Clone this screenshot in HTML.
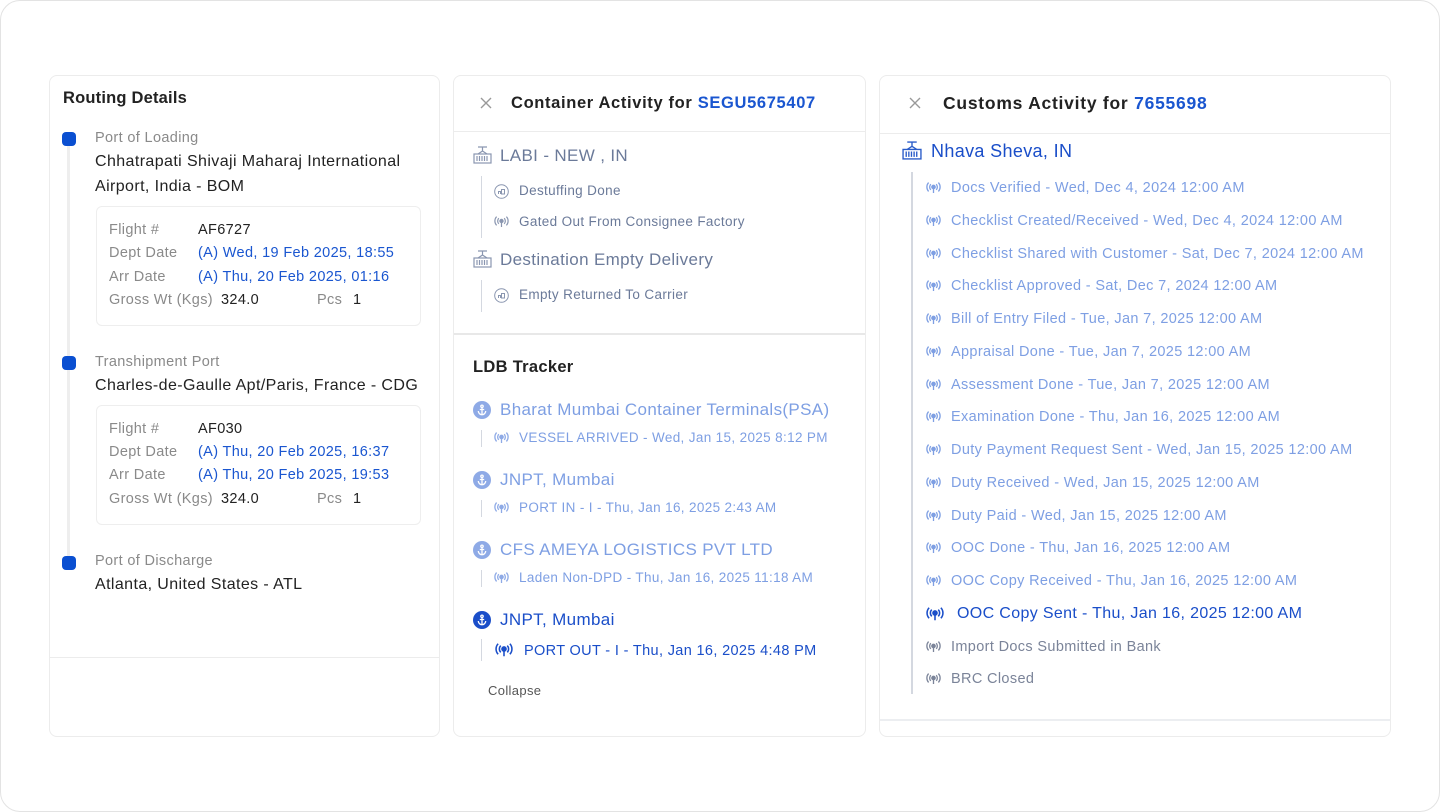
<!DOCTYPE html>
<html><head><meta charset="utf-8"><style>
*{margin:0;padding:0;box-sizing:border-box}
body{width:1440px;height:812px;background:#fff;font-family:"Liberation Sans",sans-serif;position:relative;overflow:hidden}
.outer{position:absolute;left:0;top:0;width:1440px;height:812px;border:1px solid #e3e3e3;border-radius:20px}
.p{position:absolute;border:1px solid #ececec;border-radius:8px;background:#fff}
.t{position:absolute;white-space:nowrap;line-height:20px;letter-spacing:0.35px}
.hr{position:absolute;height:1px;background:#ececec}
.vl{position:absolute;width:2px;background:#d4d8e0}
.box{position:absolute;border:1px solid #eee;border-radius:6px}
.lb{color:#8a8a8a;font-size:14.5px}
.v{color:#222;font-size:14.5px}
.bl{color:#1a56d0;font-size:14.5px}
.sq{position:absolute;width:14px;height:14px;border-radius:4px;background:#0a4fd1}
.lt{color:#7e9fe3}
.dk{color:#1a4ec9}
.gr{color:#6b7a99}
.ic{position:absolute}
.ttl{letter-spacing:0.65px}
</style></head><body>
<div class="outer"></div>

<!-- left panel -->
<div class="p" style="left:49px;top:75px;width:391px;height:662px"></div>
<div class="t" style="left:63px;top:88px;font-size:16.5px;font-weight:bold;color:#222;letter-spacing:0.2px">Routing Details</div>
<div style="position:absolute;left:67px;top:146px;width:3px;height:412px;background:#eee"></div>
<div class="sq" style="left:62px;top:132px"></div>
<div class="sq" style="left:62px;top:356px"></div>
<div class="sq" style="left:62px;top:556px"></div>
<div class="t lb" style="left:95px;top:128px">Port of Loading</div>
<div class="t v" style="left:95px;top:152px;font-size:16px;letter-spacing:0.4px">Chhatrapati Shivaji Maharaj International</div>
<div class="t v" style="left:95px;top:177px;font-size:16px;letter-spacing:0.4px">Airport, India - BOM</div>
<div class="box" style="left:96px;top:206px;width:325px;height:120px"></div>
<div class="t lb" style="left:109px;top:220px">Flight #</div><div class="t v" style="left:198px;top:220px">AF6727</div>
<div class="t lb" style="left:109px;top:243px">Dept Date</div><div class="t bl" style="left:198px;top:243px">(A) Wed, 19 Feb 2025, 18:55</div>
<div class="t lb" style="left:109px;top:267px">Arr Date</div><div class="t bl" style="left:198px;top:267px">(A) Thu, 20 Feb 2025, 01:16</div>
<div class="t lb" style="left:109px;top:290px">Gross Wt (Kgs)</div><div class="t v" style="left:221px;top:290px">324.0</div>
<div class="t lb" style="left:317px;top:290px">Pcs</div><div class="t v" style="left:353px;top:290px">1</div>

<div class="t lb" style="left:95px;top:352px">Transhipment Port</div>
<div class="t v" style="left:95px;top:376px;font-size:16px;letter-spacing:0.4px">Charles-de-Gaulle Apt/Paris, France - CDG</div>
<div class="box" style="left:96px;top:405px;width:325px;height:120px"></div>
<div class="t lb" style="left:109px;top:419px">Flight #</div><div class="t v" style="left:198px;top:419px">AF030</div>
<div class="t lb" style="left:109px;top:442px">Dept Date</div><div class="t bl" style="left:198px;top:442px">(A) Thu, 20 Feb 2025, 16:37</div>
<div class="t lb" style="left:109px;top:465px">Arr Date</div><div class="t bl" style="left:198px;top:465px">(A) Thu, 20 Feb 2025, 19:53</div>
<div class="t lb" style="left:109px;top:489px">Gross Wt (Kgs)</div><div class="t v" style="left:221px;top:489px">324.0</div>
<div class="t lb" style="left:317px;top:489px">Pcs</div><div class="t v" style="left:353px;top:489px">1</div>

<div class="t lb" style="left:95px;top:551px">Port of Discharge</div>
<div class="t v" style="left:95px;top:575px;font-size:16px;letter-spacing:0.4px">Atlanta, United States - ATL</div>
<div class="hr" style="left:50px;top:657px;width:389px"></div>

<!-- middle panel -->
<div class="p" style="left:453px;top:75px;width:413px;height:662px"></div>
<svg class="ic" style="left:480px;top:97px" width="12" height="12" viewBox="0 0 12 12"><path d="M1 1L11 11M11 1L1 11" stroke="#999" stroke-width="1.4"/></svg>
<div class="t ttl" style="left:511px;top:93px;font-size:16.5px;font-weight:bold;color:#222">Container Activity for <span style="color:#1a56d0">SEGU5675407</span></div>
<div class="hr" style="left:454px;top:131px;width:411px"></div>

<svg class="ic" style="left:473px;top:146px" width="19" height="18" viewBox="0 0 19 18" fill="none" stroke="#8a96b0" stroke-width="1.2"><path d="M5 1h9M9.5 1v4M9.5 5L5 8M9.5 5L14 8"/><rect x="1" y="8" width="17" height="9"/><path d="M4 10v5M6.5 10v5M9 10v5M11.5 10v5M14 10v5"/></svg>
<div class="t gr" style="left:500px;top:146px;font-size:17px">LABI - NEW , IN</div>
<div class="vl" style="left:481px;top:176px;height:62px;width:1px"></div>
<svg class="ic" style="left:494px;top:184px" width="15" height="15" viewBox="0 0 15 15" fill="none" stroke="#8a96b0" stroke-width="1"><circle cx="7.5" cy="7.5" r="6.8"/><path d="M4.5 10V7.5h2V10M7.5 10V5.5h3V10z"/></svg>
<div class="t gr" style="left:519px;top:181px;font-size:13.5px">Destuffing Done</div>
<svg class="ic sig" style="left:494px;top:216px" width="15" height="12" viewBox="0 0 15 12" fill="none" stroke="#8a96b0" stroke-width="1.2"><circle cx="7.5" cy="5" r="1.6" fill="#8a96b0"/><path d="M7.5 6v5M4.8 2.2a4 4 0 000 5.6M10.2 2.2a4 4 0 010 5.6M2.6 0.6a6.5 6.5 0 000 8.8M12.4 0.6a6.5 6.5 0 010 8.8"/></svg>
<div class="t gr" style="left:519px;top:212px;font-size:13.5px">Gated Out From Consignee Factory</div>
<svg class="ic" style="left:473px;top:250px" width="19" height="18" viewBox="0 0 19 18" fill="none" stroke="#8a96b0" stroke-width="1.2"><path d="M5 1h9M9.5 1v4M9.5 5L5 8M9.5 5L14 8"/><rect x="1" y="8" width="17" height="9"/><path d="M4 10v5M6.5 10v5M9 10v5M11.5 10v5M14 10v5"/></svg>
<div class="t gr" style="left:500px;top:250px;font-size:17px">Destination Empty Delivery</div>
<div class="vl" style="left:481px;top:280px;height:32px;width:1px"></div>
<svg class="ic" style="left:494px;top:288px" width="15" height="15" viewBox="0 0 15 15" fill="none" stroke="#8a96b0" stroke-width="1"><circle cx="7.5" cy="7.5" r="6.8"/><path d="M4.5 10V7.5h2V10M7.5 10V5.5h3V10z"/></svg>
<div class="t gr" style="left:519px;top:285px;font-size:13.5px">Empty Returned To Carrier</div>
<div style="position:absolute;left:454px;top:333px;width:411px;height:2px;background:#e8e8e8"></div>

<div class="t" style="left:473px;top:357px;font-size:16.5px;font-weight:bold;color:#222;letter-spacing:0.3px">LDB Tracker</div>

<div id="ldb"></div>
<div class="t" style="left:488px;top:681px;font-size:13px;color:#555">Collapse</div>

<!-- right panel -->
<div class="p" style="left:879px;top:75px;width:512px;height:662px"></div>
<svg class="ic" style="left:909px;top:97px" width="12" height="12" viewBox="0 0 12 12"><path d="M1 1L11 11M11 1L1 11" stroke="#999" stroke-width="1.4"/></svg>
<div class="t ttl" style="left:943px;top:93px;font-size:17.5px;font-weight:bold;color:#222;letter-spacing:0.75px">Customs Activity for <span style="color:#1a56d0">7655698</span></div>
<div class="hr" style="left:880px;top:133px;width:510px"></div>
<svg class="ic" style="left:902px;top:141px" width="20" height="19" viewBox="0 0 19 18" fill="none" stroke="#2a5cc9" stroke-width="1.3"><path d="M5 1h9M9.5 1v4M9.5 5L5 8M9.5 5L14 8"/><rect x="1" y="8" width="17" height="9"/><path d="M4 10v5M6.5 10v5M9 10v5M11.5 10v5M14 10v5"/></svg>
<div class="t dk" style="left:931px;top:141px;font-size:18px">Nhava Sheva, IN</div>
<div class="vl" style="left:911px;top:172px;height:522px"></div>
<div id="cus"></div>
<div class="hr" style="left:880px;top:719px;width:510px;height:2px;background:#eceef1"></div>

<script>
function sig(x,y,c,s){s=s||1;return '<svg class="ic" style="left:'+x+'px;top:'+y+'px" width="'+(15*s)+'" height="'+(12*s)+'" viewBox="0 0 15 12" fill="none" stroke="'+c+'" stroke-width="1.3"><circle cx="7.5" cy="5" r="1.7" fill="'+c+'"/><path d="M7.5 6v5M4.8 2.2a4 4 0 000 5.6M10.2 2.2a4 4 0 010 5.6M2.6 0.6a6.5 6.5 0 000 8.8M12.4 0.6a6.5 6.5 0 010 8.8"/></svg>';}
function anc(x,y,c){return '<svg class="ic" style="left:'+x+'px;top:'+y+'px" width="18" height="18" viewBox="0 0 18 18"><circle cx="9" cy="9" r="9" fill="'+c+'"/><g fill="none" stroke="#fff" stroke-width="1.3"><circle cx="9" cy="5.3" r="1.2"/><path d="M9 6.5v6.5M6.8 8.5h4.4M5.3 10a3.7 3.7 0 007.4 0"/></g></svg>';}
var h='';
var L=[["Bharat Mumbai Container Terminals(PSA)","VESSEL ARRIVED - Wed, Jan 15, 2025 8:12 PM",410,438],["JNPT, Mumbai","PORT IN - I - Thu, Jan 16, 2025 2:43 AM",480,508],["CFS AMEYA LOGISTICS PVT LTD","Laden Non-DPD - Thu, Jan 16, 2025 11:18 AM",550,578]];
L.forEach(function(r){h+=anc(473,r[2]-9,'#8eaae6')+'<div class="t lt" style="left:500px;top:'+(r[2]-10)+'px;font-size:17px">'+r[0]+'</div><div class="vl" style="left:481px;top:'+(r[3]-8)+'px;height:17px;width:1px"></div>'+sig(494,r[3]-6,'#8eaae6')+'<div class="t lt" style="left:519px;top:'+(r[3]-10)+'px;font-size:13.5px">'+r[1]+'</div>';});
h+=anc(473,611,'#1a4ec9')+'<div class="t dk" style="left:500px;top:610px;font-size:17px">JNPT, Mumbai</div><div class="vl" style="left:481px;top:639px;height:22px;width:1px"></div>'+sig(495,643,'#1a4ec9',1.2)+'<div class="t dk" style="left:524px;top:641px;font-size:14.5px">PORT OUT - I - Thu, Jan 16, 2025 4:48 PM</div>';
document.getElementById('ldb').outerHTML=h;
var C=["Docs Verified - Wed, Dec 4, 2024 12:00 AM","Checklist Created/Received - Wed, Dec 4, 2024 12:00 AM","Checklist Shared with Customer - Sat, Dec 7, 2024 12:00 AM","Checklist Approved - Sat, Dec 7, 2024 12:00 AM","Bill of Entry Filed - Tue, Jan 7, 2025 12:00 AM","Appraisal Done - Tue, Jan 7, 2025 12:00 AM","Assessment Done - Tue, Jan 7, 2025 12:00 AM","Examination Done - Thu, Jan 16, 2025 12:00 AM","Duty Payment Request Sent - Wed, Jan 15, 2025 12:00 AM","Duty Received - Wed, Jan 15, 2025 12:00 AM","Duty Paid - Wed, Jan 15, 2025 12:00 AM","OOC Done - Thu, Jan 16, 2025 12:00 AM","OOC Copy Received - Thu, Jan 16, 2025 12:00 AM","OOC Copy Sent - Thu, Jan 16, 2025 12:00 AM","Import Docs Submitted in Bank","BRC Closed"];
h='';
C.forEach(function(t,i){var y=Math.round(188+32.75*i);
 if(i==13){h+=sig(926,y-7,'#1a4ec9',1.2)+'<div class="t dk" style="left:957px;top:'+(y-10)+'px;font-size:16px">'+t+'</div>';}
 else{var c=i>13?'#7b8499':'#7e9fe3';h+=sig(926,y-6,c)+'<div class="t" style="left:951px;top:'+(y-10)+'px;font-size:14.5px;color:'+c+'">'+t+'</div>';}
});
document.getElementById('cus').outerHTML=h;
</script>
</body></html>
